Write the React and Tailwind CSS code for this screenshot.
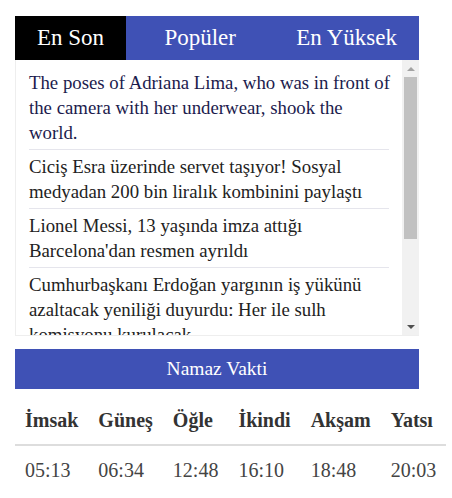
import { useState } from "react";

const tabs = ["En Son", "Popüler", "En Yüksek"];

const haberler = [
    "The poses of Adriana Lima, who was in front of the camera with her underwear, shook the world.",
    "Ciciş Esra üzerinde servet taşıyor! Sosyal medyadan 200 bin liralık kombinini paylaştı",
    "Lionel Messi, 13 yaşında imza attığı Barcelona'dan resmen ayrıldı",
    "Cumhurbaşkanı Erdoğan yargının iş yükünü azaltacak yeniliği duyurdu: Her ile sulh komisyonu kurulacak",
];

const vakitler = [
    { ad: "İmsak", saat: "05:13" },
    { ad: "Güneş", saat: "06:34" },
    { ad: "Öğle", saat: "12:48" },
    { ad: "İkindi", saat: "16:10" },
    { ad: "Akşam", saat: "18:48" },
    { ad: "Yatsı", saat: "20:03" },
];

export default function App() {
    const [aktif, setAktif] = useState(0);

    return (
        <div className="pt-4 pl-[15px] font-['Liberation_Serif',serif] bg-white min-h-[498px]">
            <div className="w-[404px]">
                {/* Sekmeler */}
                <div className="flex justify-between bg-[#3f51b5] h-[44px]">
                    {tabs.map((t, i) => (
                        <button
                            key={t}
                            onClick={() => setAktif(i)}
                            className={`px-[22px] text-[23px] text-white leading-[44px] ${aktif === i ? "bg-black" : ""}`}
                        >
                            {t}
                        </button>
                    ))}
                </div>

                {/* Haber listesi */}
                <div className="flex h-[276px] border-l border-b border-[#eeeeee]">
                    <div className="flex-1 overflow-hidden pt-[6px]">
                        {haberler.map((h, i) => (
                            <div
                                key={i}
                                className={`mx-[13px] py-[4px] text-[18.8px] leading-[25px] ${i === 0 ? "text-[#1c1b4d]" : "text-[#222222] border-t border-[#e5e5ec]"}`}
                            >
                                <div className="mr-[-6px]">{h}</div>
                            </div>
                        ))}
                    </div>
                    <div className="w-[17px] bg-[#f1f1f1] flex flex-col items-center">
                        <div className="h-[17px] flex items-center justify-center">
                            <div className="w-0 h-0 border-l-4 border-r-4 border-b-4 border-l-transparent border-r-transparent border-b-[#a3a3a3]" />
                        </div>
                        <div className="w-[13px] h-[162px] bg-[#c1c1c1]" />
                        <div className="flex-1" />
                        <div className="h-[17px] flex items-center justify-center">
                            <div className="w-0 h-0 border-l-4 border-r-4 border-t-4 border-l-transparent border-r-transparent border-t-[#505050]" />
                        </div>
                    </div>
                </div>

                {/* Namaz vakti */}
                <div className="mt-[13px] h-[40px] bg-[#3f51b5] text-white text-[19.5px] flex items-center justify-center">
                    Namaz Vakti
                </div>
            </div>

            <table className="w-[431px] mt-[7px] text-[20px]">
                <thead>
                    <tr className="border-b-2 border-[#dddddd]">
                        {vakitler.map((v) => (
                            <th key={v.ad} className="text-left font-bold text-[#333333] px-[10px] py-[12px] leading-[24px]">
                                {v.ad}
                            </th>
                        ))}
                    </tr>
                </thead>
                <tbody>
                    <tr>
                        {vakitler.map((v) => (
                            <td key={v.ad} className="text-left text-[#444444] px-[10px] py-[12px] leading-[24px]">
                                {v.saat}
                            </td>
                        ))}
                    </tr>
                </tbody>
            </table>
        </div>
    );
}
